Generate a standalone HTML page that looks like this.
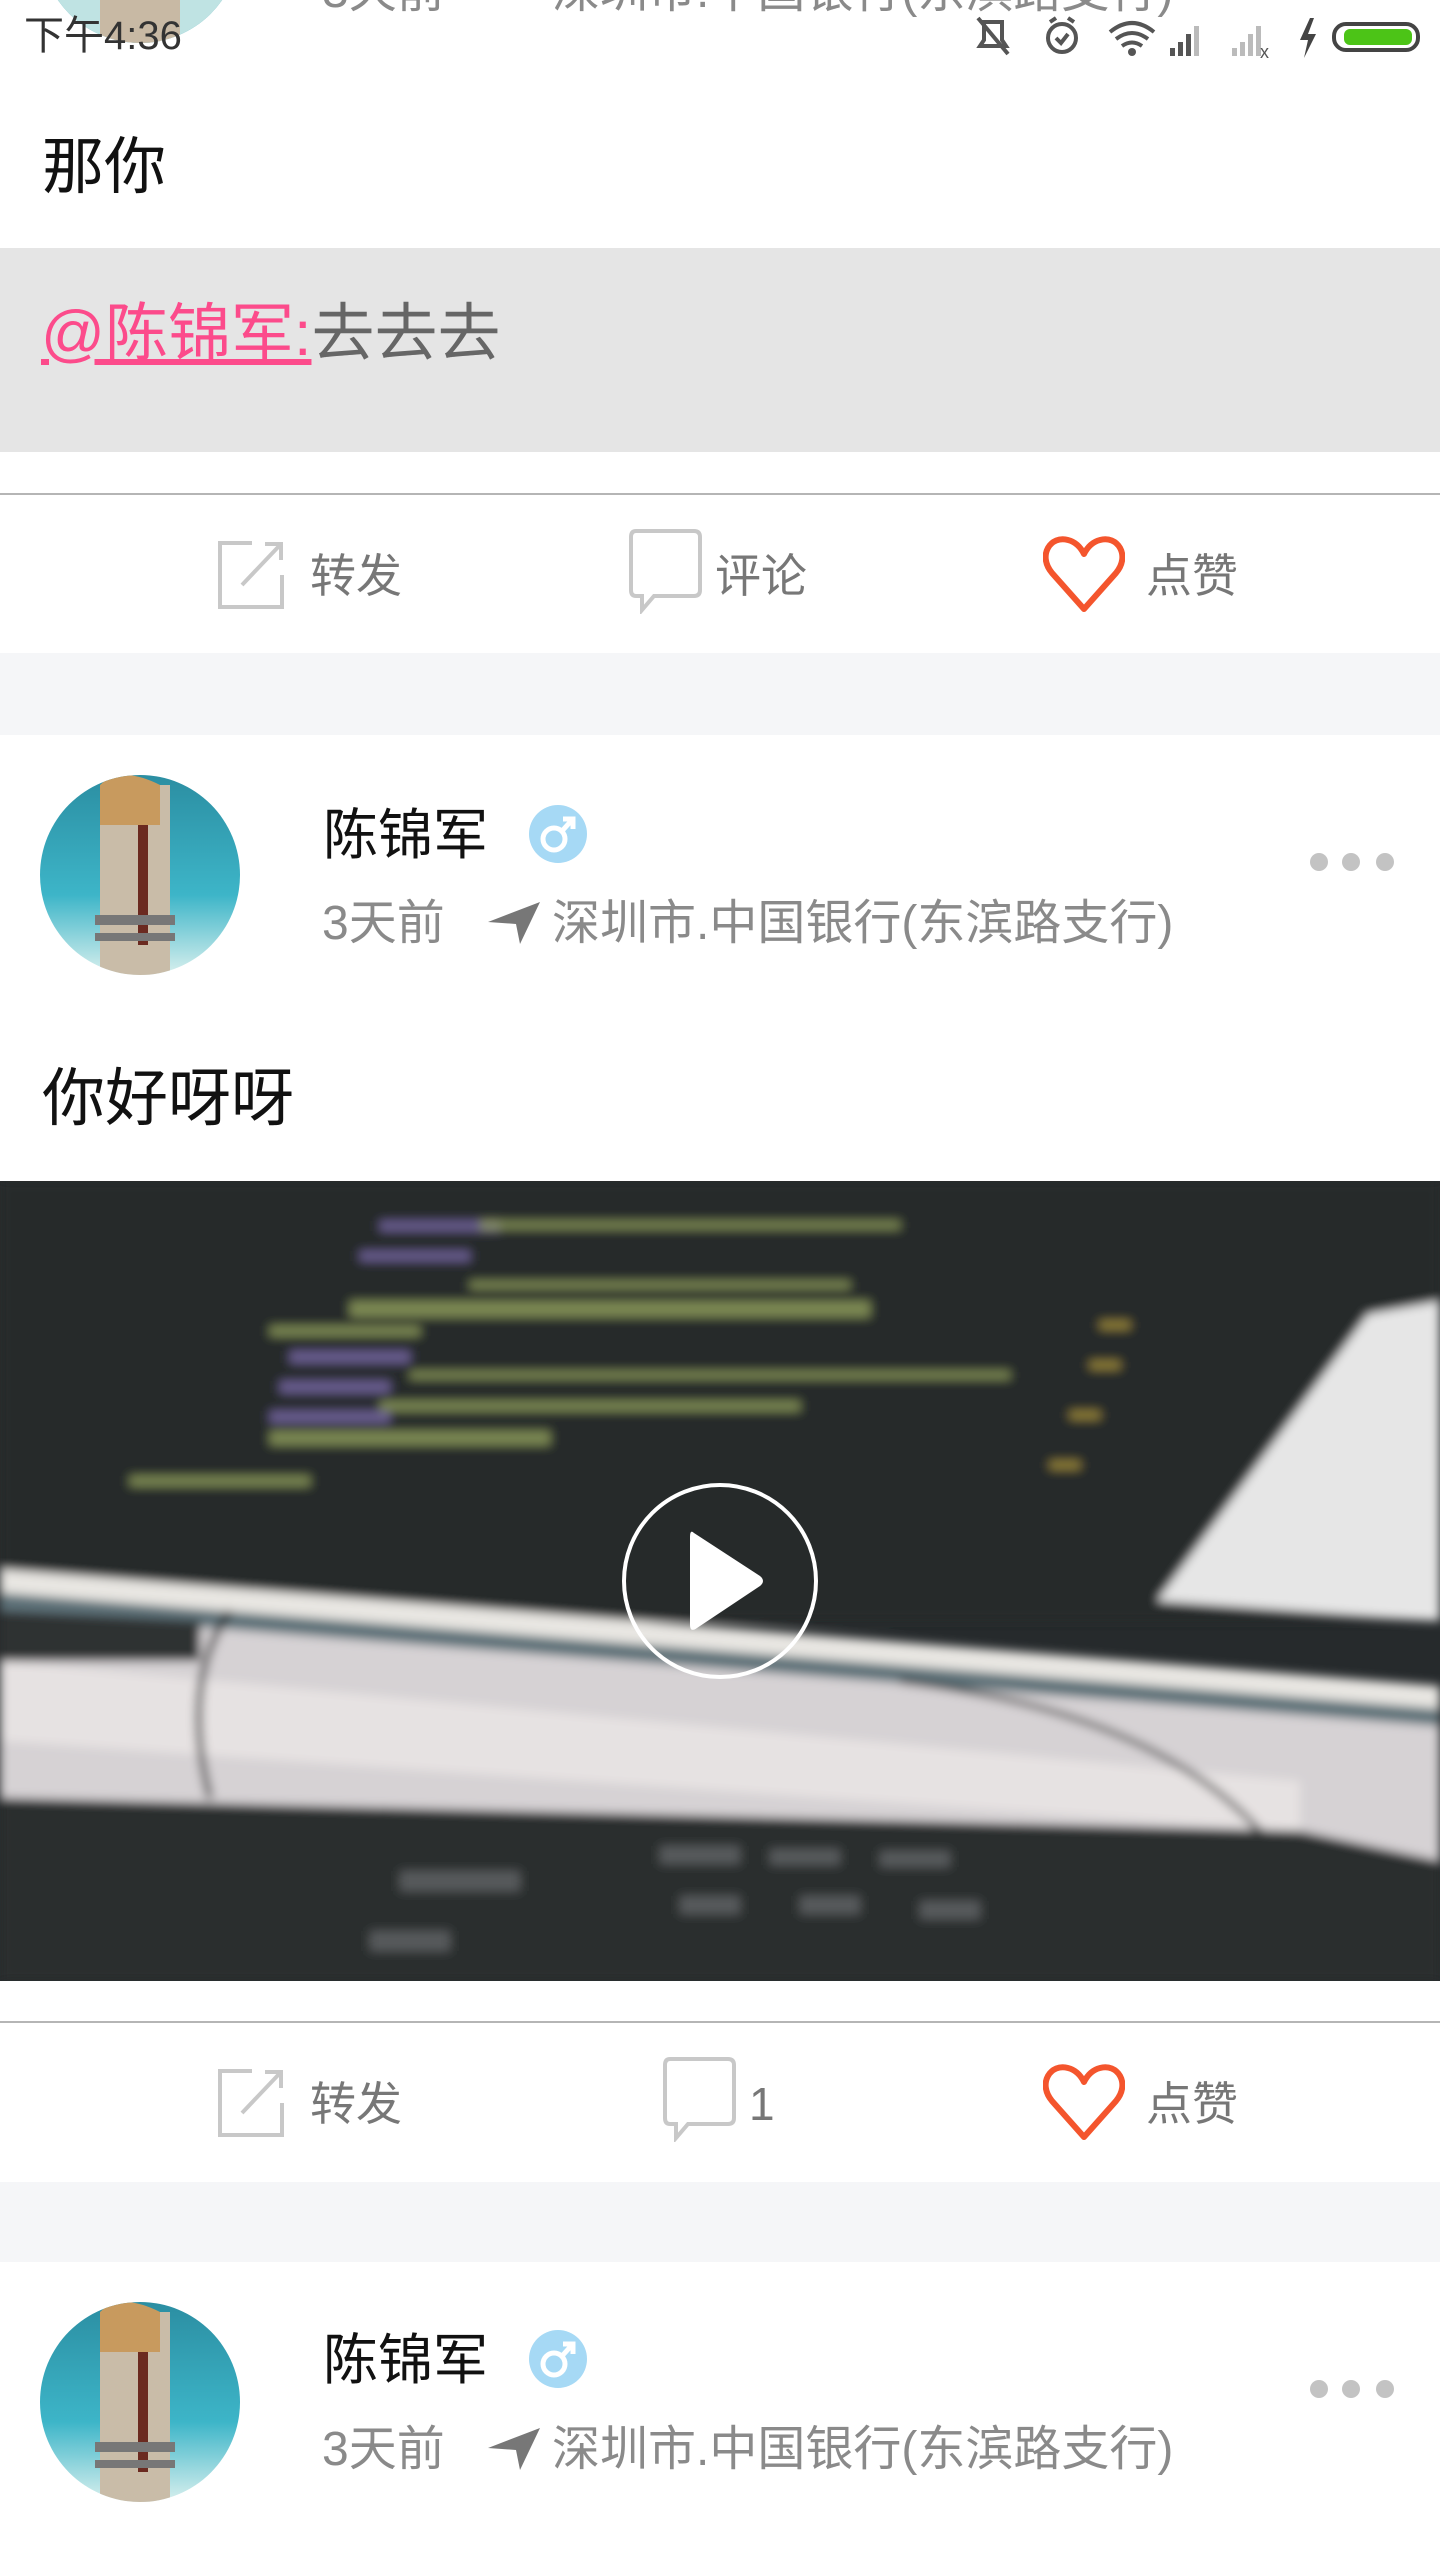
<!DOCTYPE html>
<html><head><meta charset="utf-8">
<style>
*{margin:0;padding:0;box-sizing:border-box}
body{width:1440px;height:2560px;overflow:hidden;background:#fff;font-family:"Liberation Sans","Noto Sans CJK SC",sans-serif;position:relative}
.abs{position:absolute}
.txt{position:absolute;white-space:nowrap;line-height:1}
.name{font-size:55px;color:#111}
.meta{font-size:48px;color:#8a8a8a}
.act{font-size:46px;color:#777}
.dot{position:absolute;width:18px;height:18px;border-radius:50%;background:#c3c3c3}
</style></head><body>

<svg class="abs" style="left:40px;top:-157px" width="200" height="200" viewBox="0 0 200 200">
<defs><clipPath id="c0"><circle cx="100" cy="100" r="100"/></clipPath></defs>
<g clip-path="url(#c0)"><rect width="200" height="200" fill="#2c98aa"/><rect y="140" width="200" height="60" fill="#bfe3e3"/><rect x="60" y="20" width="80" height="180" fill="#c8b9a4"/></g></svg>
<div class="txt meta" style="left:322px;top:-32px">3天前</div>
<div class="txt meta" style="left:552px;top:-32px">深圳市.中国银行(东滨路支行)</div>

<div class="txt" style="left:24px;top:16px;font-size:40px;color:#333">下午4:36</div>
<svg class="abs" style="left:970px;top:14px" width="460" height="46" viewBox="0 0 460 46">
<g fill="none" stroke="#555" stroke-width="4">
<path d="M14 8 h18 v18 l4 6 h-26 l4-6z"/><path d="M8 4 L38 40"/>
<circle cx="92" cy="24" r="14"/><path d="M86 24 l5 5 l7-9"/><path d="M80 8 l6 -4 M104 8 l-6 -4"/>
<path d="M140 18 q22-18 44 0 M146 25 q16-12 32 0 M152 32 q10-7 20 0"/>
</g>
<circle cx="162" cy="38" r="4" fill="#555"/>
<g fill="#555"><rect x="200" y="34" width="5" height="8"/><rect x="208" y="28" width="5" height="14"/><rect x="216" y="20" width="5" height="22"/></g>
<g fill="#bbb"><rect x="224" y="12" width="5" height="30"/></g>
<g fill="#bbb"><rect x="262" y="34" width="5" height="8"/><rect x="270" y="28" width="5" height="14"/><rect x="278" y="20" width="5" height="22"/><rect x="286" y="12" width="5" height="30"/></g>
<text x="290" y="44" font-size="18" fill="#555" font-family="Liberation Sans">x</text>
<path d="M340 4 l-10 22 h8 l-4 18 l12-24 h-8 l6-16z" fill="#444"/>
<rect x="364" y="10" width="84" height="26" rx="12" fill="none" stroke="#444" stroke-width="4"/>
<rect x="374" y="15" width="68" height="16" rx="6" fill="#4cc417"/>
</svg>

<div class="txt" style="left:42px;top:137px;font-size:62px;color:#111">那你</div>
<div class="abs" style="left:0;top:248px;width:1440px;height:204px;background:#e5e5e5"></div>
<div class="txt" style="left:41px;top:303px;font-size:63px;color:#666"><span style="color:#fc4b8b;text-decoration:underline">@陈锦军:</span>去去去</div>
<div class="abs" style="left:0;top:493px;width:1440px;height:2px;background:#b5b5b5"></div>

<svg class="abs" style="left:217px;top:540px" width="70" height="70" viewBox="0 0 70 70"><path d="M35 3 H3 V67 H65 V35" fill="none" stroke="#c8c8c8" stroke-width="4"/><path d="M25 45 L64 4 M48 4 H64 V20" fill="none" stroke="#c8c8c8" stroke-width="4"/></svg>
<div class="txt act" style="left:310px;top:553px">转发</div>
<svg class="abs" style="left:628px;top:528px" width="76" height="86" viewBox="0 0 76 86"><path d="M8 3 H66 Q72 3 72 9 V62 Q72 68 66 68 H26 L14 82 V68 H8 Q3 68 3 62 V9 Q3 3 8 3z" fill="none" stroke="#c8c8c8" stroke-width="4"/></svg>
<div class="txt act" style="left:715px;top:553px">评论</div>
<svg class="abs" style="left:1043px;top:535px" width="82" height="80" viewBox="0 0 82 80"><path d="M41 74 L9 38 C-6 20 8 0 25 5 C33 7 38 13 41 19 C44 13 49 7 57 5 C74 0 88 20 73 38 Z" fill="none" stroke="#f4552d" stroke-width="6" stroke-linejoin="round"/></svg>
<div class="txt act" style="left:1146px;top:553px">点赞</div>

<div class="abs" style="left:0;top:653px;width:1440px;height:82px;background:#f5f6f8"></div>

<svg class="abs" style="left:40px;top:775px" width="200" height="200" viewBox="0 0 200 200">
<defs><clipPath id="c1"><circle cx="100" cy="100" r="100"/></clipPath><linearGradient id="g1" x1="0" y1="0" x2="0" y2="1"><stop offset="0" stop-color="#2b8ea2"/><stop offset=".6" stop-color="#3db5c8"/><stop offset="1" stop-color="#d9f0ee"/></linearGradient></defs>
<g clip-path="url(#c1)"><rect width="200" height="200" fill="url(#g1)"/><rect x="60" y="10" width="70" height="190" fill="#c9bca8"/><rect x="98" y="20" width="10" height="150" fill="#6b2a20"/><rect x="55" y="140" width="80" height="10" fill="#777"/><rect x="55" y="158" width="80" height="8" fill="#777"/><path d="M60 10 q20-20 60 0 v40 h-60z" fill="#c89a5e"/></g></svg>
<div class="txt name" style="left:323px;top:808px">陈锦军</div>
<svg class="abs" style="left:528px;top:804px" width="60" height="60" viewBox="0 0 60 60"><circle cx="30" cy="30" r="29" fill="#a6d9f5"/><circle cx="26" cy="35" r="11" fill="none" stroke="#fff" stroke-width="5"/><path d="M34 27 L44 16 M35 15 H45 V25" fill="none" stroke="#fff" stroke-width="5"/></svg>
<div class="dot" style="left:1310px;top:853px"></div><div class="dot" style="left:1342px;top:853px"></div><div class="dot" style="left:1376px;top:853px"></div>
<div class="txt meta" style="left:322px;top:900px">3天前</div>
<svg class="abs" style="left:486px;top:900px" width="56" height="46" viewBox="0 0 56 46"><path d="M2 22 L54 2 L34 44 L30 24 Z" fill="#777"/></svg>
<div class="txt meta" style="left:552px;top:900px">深圳市.中国银行(东滨路支行)</div>

<div class="txt" style="left:42px;top:1068px;font-size:63px;color:#111">你好呀呀</div>

<svg class="abs" style="left:0;top:1181px" width="1440" height="800" viewBox="0 0 1440 800">
<defs><filter id="bl"><feGaussianBlur stdDeviation="5"/></filter></defs>
<rect width="1440" height="800" fill="#262a2c"/>
<g filter="url(#bl)">
<rect x="0" y="0" width="1440" height="440" fill="#25292b"/>
<g fill="#7a6aa8" opacity=".8"><rect x="380" y="40" width="120" height="10"/><rect x="360" y="70" width="110" height="10"/><rect x="290" y="170" width="120" height="12"/><rect x="280" y="200" width="110" height="12"/><rect x="270" y="230" width="120" height="12"/></g>
<g fill="#9aa860" opacity=".75"><rect x="480" y="40" width="420" height="8"/><rect x="470" y="100" width="380" height="8"/><rect x="350" y="120" width="520" height="16"/><rect x="410" y="190" width="600" height="8"/><rect x="380" y="220" width="420" height="10"/><rect x="270" y="250" width="280" height="14"/><rect x="130" y="295" width="180" height="10"/><rect x="270" y="145" width="150" height="10"/></g>
<g fill="#c2a840" opacity=".7"><rect x="1100" y="140" width="30" height="8"/><rect x="1090" y="180" width="30" height="8"/><rect x="1070" y="230" width="30" height="8"/><rect x="1050" y="280" width="30" height="8"/></g>
<polygon points="1368,133 1440,120 1440,440 1157,420" fill="#e6e6e6"/>
<polygon points="0,388 1440,505 1440,528 0,412" fill="#e8e6e2"/>
<polygon points="0,412 1440,528 1440,545 0,430" fill="#5d7178"/>
<polygon points="0,430 1440,545 1440,680 0,617" fill="#d6d2d4"/>
<polygon points="0,480 1300,600 1300,650 0,560" fill="#e6e2e2"/>
<polygon points="0,430 200,440 200,480 0,480" fill="#2e3133"/>
<path d="M230 430 Q180 500 210 617" stroke="#222" stroke-width="6" fill="none"/>
<path d="M900 500 Q1150 530 1260 650" stroke="#222" stroke-width="5" fill="none"/>
<polygon points="0,617 1300,650 1440,680 1440,800 0,800" fill="#2a2d2e"/>
<g fill="#6a6e6e" opacity=".7"><rect x="660" y="665" width="80" height="18"/><rect x="770" y="668" width="70" height="16"/><rect x="880" y="670" width="70" height="16"/><rect x="400" y="690" width="120" height="20"/><rect x="680" y="715" width="60" height="18"/><rect x="800" y="715" width="60" height="18"/><rect x="920" y="720" width="60" height="18"/><rect x="370" y="750" width="80" height="20"/></g>
</g>
<circle cx="720" cy="400" r="96" fill="none" stroke="#fff" stroke-width="4"/>
<path d="M694 352 Q690 348 690 356 V444 Q690 452 697 447 L760 405 Q766 400 760 395 Z" fill="#fff"/>
</svg>

<div class="abs" style="left:0;top:2021px;width:1440px;height:2px;background:#b5b5b5"></div>
<svg class="abs" style="left:217px;top:2068px" width="70" height="70" viewBox="0 0 70 70"><path d="M35 3 H3 V67 H65 V35" fill="none" stroke="#c8c8c8" stroke-width="4"/><path d="M25 45 L64 4 M48 4 H64 V20" fill="none" stroke="#c8c8c8" stroke-width="4"/></svg>
<div class="txt act" style="left:310px;top:2081px">转发</div>
<svg class="abs" style="left:662px;top:2056px" width="76" height="86" viewBox="0 0 76 86"><path d="M8 3 H66 Q72 3 72 9 V62 Q72 68 66 68 H26 L14 82 V68 H8 Q3 68 3 62 V9 Q3 3 8 3z" fill="none" stroke="#c8c8c8" stroke-width="4"/></svg>
<div class="txt act" style="left:749px;top:2081px">1</div>
<svg class="abs" style="left:1043px;top:2063px" width="82" height="80" viewBox="0 0 82 80"><path d="M41 74 L9 38 C-6 20 8 0 25 5 C33 7 38 13 41 19 C44 13 49 7 57 5 C74 0 88 20 73 38 Z" fill="none" stroke="#f4552d" stroke-width="6" stroke-linejoin="round"/></svg>
<div class="txt act" style="left:1146px;top:2081px">点赞</div>

<div class="abs" style="left:0;top:2182px;width:1440px;height:80px;background:#f5f6f8"></div>

<svg class="abs" style="left:40px;top:2302px" width="200" height="200" viewBox="0 0 200 200">
<defs><clipPath id="c2"><circle cx="100" cy="100" r="100"/></clipPath></defs>
<g clip-path="url(#c2)"><rect width="200" height="200" fill="url(#g1)"/><rect x="60" y="10" width="70" height="190" fill="#c9bca8"/><rect x="98" y="20" width="10" height="150" fill="#6b2a20"/><rect x="55" y="140" width="80" height="10" fill="#777"/><rect x="55" y="158" width="80" height="8" fill="#777"/><path d="M60 10 q20-20 60 0 v40 h-60z" fill="#c89a5e"/></g></svg>
<div class="txt name" style="left:323px;top:2333px">陈锦军</div>
<svg class="abs" style="left:528px;top:2329px" width="60" height="60" viewBox="0 0 60 60"><circle cx="30" cy="30" r="29" fill="#a6d9f5"/><circle cx="26" cy="35" r="11" fill="none" stroke="#fff" stroke-width="5"/><path d="M34 27 L44 16 M35 15 H45 V25" fill="none" stroke="#fff" stroke-width="5"/></svg>
<div class="dot" style="left:1310px;top:2380px"></div><div class="dot" style="left:1342px;top:2380px"></div><div class="dot" style="left:1376px;top:2380px"></div>
<div class="txt meta" style="left:322px;top:2426px">3天前</div>
<svg class="abs" style="left:486px;top:2426px" width="56" height="46" viewBox="0 0 56 46"><path d="M2 22 L54 2 L34 44 L30 24 Z" fill="#777"/></svg>
<div class="txt meta" style="left:552px;top:2426px">深圳市.中国银行(东滨路支行)</div>
</body></html>
